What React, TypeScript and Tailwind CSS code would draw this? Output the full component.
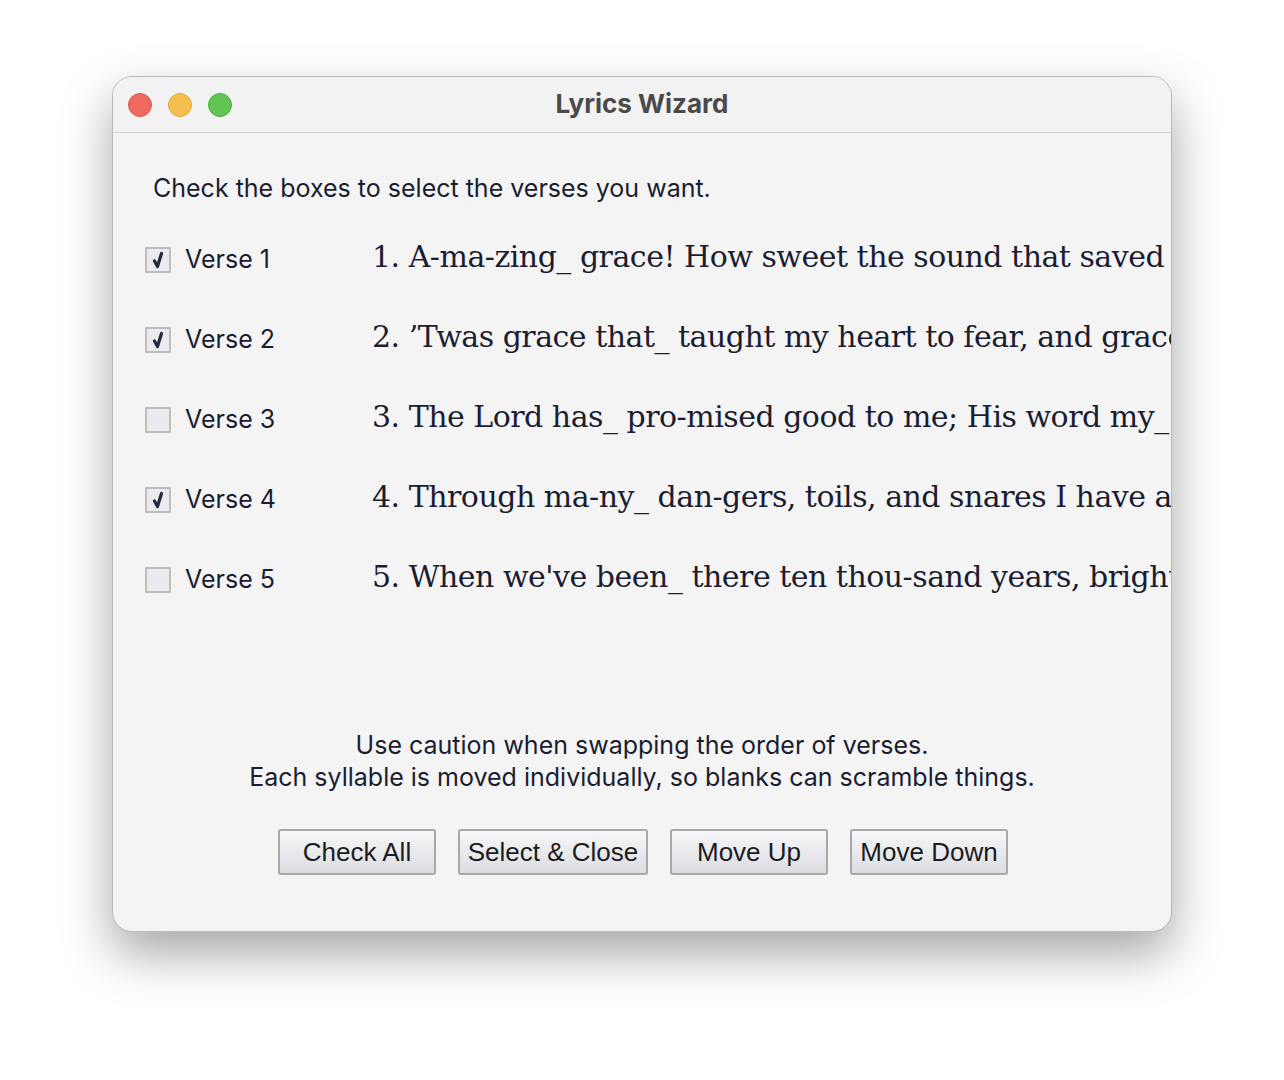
const verses = [
  { label: "Verse 1", checked: true, text: "1. A-ma-zing_ grace! How sweet the sound that saved a wretch like me!" },
  { label: "Verse 2", checked: true, text: "2. \u2019Twas grace that_ taught my heart to fear, and grace my fears re-lieved;" },
  { label: "Verse 3", checked: false, text: "3. The Lord has_ pro-mised good to me; His word my_ hope se-cures;" },
  { label: "Verse 4", checked: true, text: "4. Through ma-ny_ dan-gers, toils, and snares I have al-read-y come;" },
  { label: "Verse 5", checked: false, text: "5. When we've been_ there ten thou-sand years, bright shin-ing as the sun," },
];

function Checkbox({ checked }: { checked: boolean }) {
  return (
    <div className="w-[26px] h-[26px] border-2 border-[#bdbdbd] bg-[#e9ebef] flex items-center justify-center">
      {checked && (
        <svg width="16" height="18" viewBox="0 0 16 18">
          <path d="M4.5 10 L7.5 15.5 L11.5 2.5" fill="none" stroke="#262938" strokeWidth="3.2" strokeLinecap="round" strokeLinejoin="round" />
        </svg>
      )}
    </div>
  );
}

function Button({ label, w }: { label: string; w: string }) {
  return (
    <button className={`${w} h-[46px] rounded-[3px] border-2 border-[#a9a9a9] bg-gradient-to-b from-[#f7f7f9] to-[#dcdde1] text-[26px] text-[#1b1b22] font-['Liberation_Sans',Arial,sans-serif] flex items-center justify-center`}>
      {label}
    </button>
  );
}

export default function App() {
  return (
    <div className="w-[1284px] h-[1080px] bg-white pt-[76px] pl-[112px] font-['Inter',sans-serif]">
      <div className="w-[1060px] h-[856px] rounded-[20px] overflow-hidden bg-[#f4f4f4] border border-[#b8b8b8] shadow-[0_22px_50px_rgba(0,0,0,0.35)] flex flex-col">
        {/* Title bar */}
        <div className="h-[56px] shrink-0 bg-[#f2f2f2] border-b border-[#d6d6d6] relative flex items-center">
          <div className="flex gap-[16px] pl-[15px]">
            <div className="w-[24px] h-[24px] rounded-full bg-[#ee6a5f] border border-[#d95a50]" />
            <div className="w-[24px] h-[24px] rounded-full bg-[#f5bf4f] border border-[#dea83c]" />
            <div className="w-[24px] h-[24px] rounded-full bg-[#61c554] border border-[#4fae44]" />
          </div>
          <div className="absolute inset-0 flex items-center justify-center text-[26px] font-bold text-[#4a4a4a] pb-[2px]">
            Lyrics Wizard
          </div>
        </div>

        {/* Content */}
        <div className="flex-1 flex flex-col text-[#1b1d30]">
          <div className="pl-[40px] pt-[40px] text-[25px] leading-[30px]">
            Check the boxes to select the verses you want.
          </div>

          <div className="mt-[17px] flex flex-col">
            {verses.map((v) => (
              <div key={v.label} className="h-[80px] flex items-center">
                <div className="w-[259px] shrink-0 flex items-center pl-[32px]">
                  <Checkbox checked={v.checked} />
                  <span className="ml-[14px] text-[25px]">{v.label}</span>
                </div>
                <div className="flex-1 overflow-hidden whitespace-nowrap text-[30px] font-['DejaVu_Serif',serif] tracking-[-0.5px] leading-none pb-[6px]">
                  {v.text}
                </div>
              </div>
            ))}
          </div>

          <div className="mt-[109px] text-center text-[25px] leading-[32px]">
            <div>Use caution when swapping the order of verses.</div>
            <div>Each syllable is moved individually, so blanks can scramble things.</div>
          </div>

          <div className="mt-[36px] flex justify-center gap-[22px] pl-[2px]">
            <Button label="Check All" w="w-[158px]" />
            <Button label="Select &amp; Close" w="w-[190px]" />
            <Button label="Move Up" w="w-[158px]" />
            <Button label="Move Down" w="w-[158px]" />
          </div>
        </div>
      </div>
    </div>
  );
}
